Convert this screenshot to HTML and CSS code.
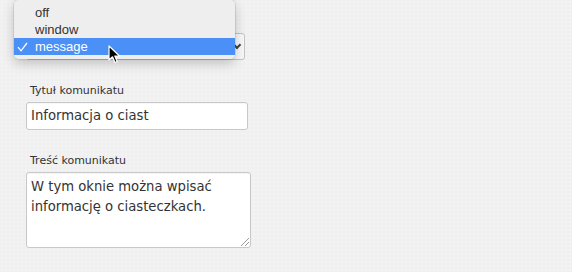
FILE: index.html
```html
<!DOCTYPE html>
<html lang="pl">
<head>
    <meta charset="UTF-8">
    <title>Komunikat o ciasteczkach</title>
    <link rel="stylesheet" href="styles.css">
</head>
<body>

    <div class="panel">
        <!-- Tryb wyświetlania -->
        <div class="field">
            <div class="select">
                <span class="chevron"></span>
            </div>

            <!-- Otwarta lista -->
            <ul class="menu">
                <li class="item">off</li>
                <li class="item">window</li>
                <li class="item selected">
                    <svg class="check" width="11" height="10" viewBox="0 0 11 10">
                        <path d="M1 5.2 L4 8.8 L10 1" fill="none" stroke="#fff" stroke-width="1.3"/>
                    </svg>message</li>
            </ul>

            <svg class="cursor" width="14" height="20" viewBox="0 0 14 20">
                <path d="M1 1 L1 15 L4.5 11.8 L7 17.5 L9.2 16.5 L6.8 11 L11.5 11 Z" fill="#000" stroke="#fff" stroke-width="1.2" stroke-linejoin="round"/>
            </svg>
        </div>

        <div class="field">
            <label class="label">Tytuł komunikatu</label>
            <div class="input">Informacja o ciast</div>
        </div>

        <div class="field">
            <label class="label">Treść komunikatu</label>
            <div class="textarea">W tym oknie można wpisać informację o ciasteczkach.
                <span class="grip"></span>
            </div>
        </div>
    </div>

</body>
</html>
```

FILE: styles.css
```css
/* Ogólne */
body {
    margin: 0;
    background-color: #f0f0f0;
    background-image: radial-gradient(rgba(255, 255, 255, 0.35) 0.6px, transparent 1px);
    background-size: 4px 4px;
    font-family: "DejaVu Sans", Verdana, sans-serif;
    color: #333;
    overflow: hidden;
}

.panel {
    padding: 33px 0 0 26px;
    display: flex;
    flex-direction: column;
    gap: 24px;
}

.field {
    display: flex;
    flex-direction: column;
    gap: 4px;
}

.field:first-child {
    position: relative;
}

.label {
    font-size: 11px;
    line-height: 14px;
    padding-left: 4px;
    color: #333;
}

/* Pole wyboru (zakryte listą) */
.select {
    width: 217px;
    height: 25px;
    border: 1px solid #c4c4c4;
    border-radius: 3px;
    background: #f8f8f8;
    display: flex;
    align-items: center;
    justify-content: flex-end;
}

.chevron {
    width: 4px;
    height: 4px;
    border-right: 2px solid #444;
    border-bottom: 2px solid #444;
    transform: rotate(45deg);
    margin: 0 4px 4px 0;
}

.menu {
    position: absolute;
    left: -12px;
    top: -33px;
    width: 221px;
    margin: 0;
    padding: 4px 0;
    list-style: none;
    background: rgba(238, 238, 238, 0.98);
    border-radius: 5px;
    box-shadow: 0 0 0 1px rgba(0, 0, 0, 0.08), 0 4px 12px rgba(0, 0, 0, 0.22);
    font-family: "Liberation Sans", Arial, sans-serif;
    font-size: 13px;
}

.item {
    height: 17px;
    line-height: 17px;
    padding-left: 21px;
    color: #333;
    position: relative;
}

.item.selected {
    background: #4a90f7;
    color: #fff;
}

.check {
    position: absolute;
    left: 3px;
    top: 4px;
}

.cursor {
    position: absolute;
    left: 82px;
    top: 12px;
}

/* Pola tekstowe */
.input,
.textarea {
    background: #fff;
    border: 1px solid #c8c8c8;
    border-radius: 3px;
    box-shadow: inset 0 1px 1px rgba(0, 0, 0, 0.04);
    font-size: 13.2px;
    color: #333;
    padding: 0 4px;
    box-sizing: border-box;
}

.input {
    width: 222px;
    height: 28px;
    line-height: 26px;
}

.textarea {
    width: 225px;
    height: 76px;
    padding-top: 4px;
    line-height: 20px;
    position: relative;
}

.grip {
    position: absolute;
    right: 1px;
    bottom: 1px;
    width: 8px;
    height: 8px;
    background: linear-gradient(135deg, transparent 45%, #999 45%, #999 55%, transparent 55%, transparent 70%, #999 70%, #999 80%, transparent 80%);
}
```
